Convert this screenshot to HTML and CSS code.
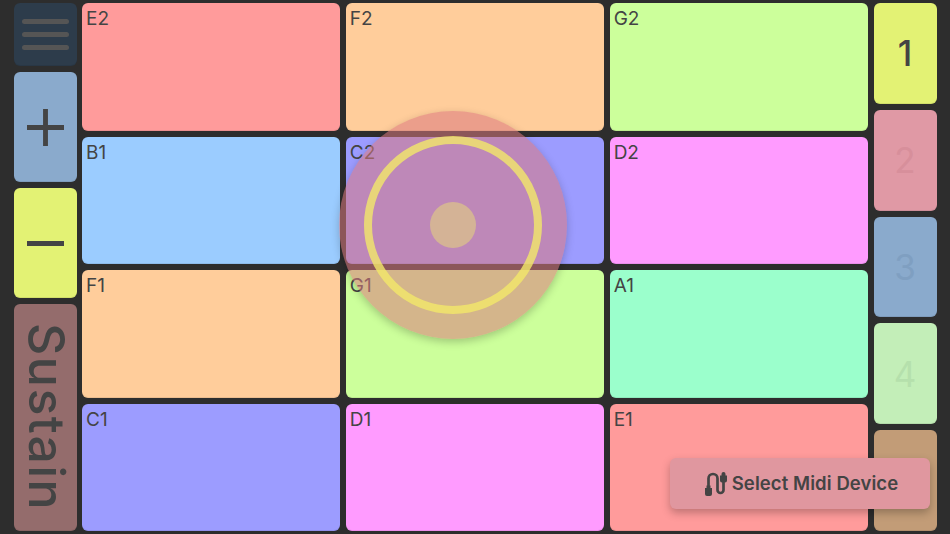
FILE: index.html
```html
<!DOCTYPE html>
<html lang="en">
<head>
<meta charset="utf-8">
<title>Midi Pads</title>
<link rel="stylesheet" href="styles.css">
</head>
<body>
<main class="app">
  <aside class="side">
    <button class="key menu" aria-label="Menu"><span class="bar"></span><span class="bar"></span><span class="bar"></span></button>
    <button class="key plus" aria-label="Octave up">
      <svg class="sign" viewBox="0 0 38 38"><path d="M16.500 0h5v16.500H38v5H21.500V38h-5V21.500H0v-5h16.500z"/></svg>
    </button>
    <button class="key minus" aria-label="Octave down">
      <svg class="sign" viewBox="0 0 38 38"><path d="M0 16.500h38v5H0z"/></svg>
    </button>
    <button class="key sustain"><span class="sustain-text">Sustain</span></button>
  </aside>
  <section class="pads">
    <div class="pad red">E2</div>
    <div class="pad orange">F2</div>
    <div class="pad green">G2</div>
    <div class="pad blue">B1</div>
    <div class="pad violet">C2</div>
    <div class="pad pink">D2</div>
    <div class="pad orange">F1</div>
    <div class="pad green">G1</div>
    <div class="pad mint">A1</div>
    <div class="pad violet">C1</div>
    <div class="pad pink">D1</div>
    <div class="pad red">E1</div>
  </section>
  <aside class="side channels">
    <button class="key ch ch1">1</button>
    <button class="key ch ch2">2</button>
    <button class="key ch ch3">3</button>
    <button class="key ch ch4">4</button>
    <button class="key ch ch5"></button>
  </aside>
  <div class="touch"><div class="ring"></div><div class="dot"></div></div>
  <button class="midi">
    <svg class="midi-icon" viewBox="0 0 23 24">
      <path class="cable" d="M4.500 15V6.500a4.500 4.500 0 0 1 9 0V18a3 3 0 0 0 6 0V9"/>
      <path class="plug" d="M2.500 13.500h4v2.500H8V22a2 2 0 0 1-2 2H3a2 2 0 0 1-2-2v-6h1.500z"/>
      <path class="plug" d="M17.500 2a2 2 0 0 1 4 0v1.500H23V8.500a2 2 0 0 1-2 2h-3a2 2 0 0 1-2-2v-5h1.500z"/>
    </svg>
    <span class="midi-label">Select Midi Device</span>
  </button>
</main>
</body>
</html>
```
FILE: styles.css
```css
* { box-sizing: border-box; }
html, body { margin: 0; height: 100%; }
body { background: #2d2d2d; font-family: Inter, "Liberation Sans", sans-serif; color: #444; overflow: hidden; }
button { border: 0; padding: 0; margin: 0; font: inherit; color: inherit; }

.app { position: relative; width: 950px; height: 534px; padding: 3px 13.500px; display: flex; gap: 5.500px; }

.side { width: 63px; flex: none; display: flex; flex-direction: column; gap: 6px; }
.key { display: flex; align-items: center; justify-content: center; border-radius: 6px; box-shadow: inset 0 -1px 0 rgba(0,0,0,.08); }

.menu { height: 63px; flex: none; flex-direction: column; gap: 8px; background: #2d3c4b; }
.bar { width: 47px; height: 5px; border-radius: 3px; background: #555; }
.plus { height: 110px; flex: none; background: #8aaacc; }
.minus { height: 110px; flex: none; background: #e3f274; }
.sign { width: 37px; height: 37px; fill: #444; }
.sustain { flex: 1; background: #946c6c; padding-left: 4px; }
.sustain-text { writing-mode: vertical-rl; font-size: 50px; font-weight: 500; line-height: 1; letter-spacing: 1.500px; }

.pads { flex: 1; display: grid; grid-template-columns: repeat(3, 1fr); grid-template-rows: repeat(4, 1fr); gap: 6px 5.500px; }
.pad { border-radius: 6px; padding: 4px; font-size: 19px; line-height: 23px; box-shadow: inset 0 -1px 0 rgba(0,0,0,.08); }
.red { background: #ff9b9b; }
.orange { background: #ffcd9b; }
.green { background: #ccff9b; }
.blue { background: #9bccff; }
.violet { background: #9c9cff; }
.pink { background: #ff9bff; }
.mint { background: #9bffcc; }

.channels { gap: 6px; }
.ch { flex: 1; font-size: 35px; }
.ch1 { background: #e3f274; color: #444; font-weight: 500; }
.ch2 { background: #e099a5; color: #d78f9b; }
.ch3 { background: #8aaacc; color: #7f9fc1; }
.ch4 { background: #c3eeb8; color: #b5e0ac; }
.ch5 { background: #c29c77; }

.touch { position: absolute; left: 338.500px; top: 110.500px; width: 228px; height: 228px; border-radius: 50%; background: rgba(218,120,125,.55); box-shadow: 0 3px 8px rgba(0,0,0,.22); display: flex; align-items: center; justify-content: center; }
.ring { position: absolute; left: 25px; top: 25px; width: 178px; height: 178px; border-radius: 50%; border: 8px solid rgba(243,232,105,.8); }
.dot { width: 46px; height: 46px; border-radius: 50%; background: #d4b396; }

.midi { position: absolute; left: 670px; top: 458px; width: 260px; height: 51px; padding-left: 2px; border-radius: 6px; background: #e0979f; box-shadow: 0 4px 8px rgba(0,0,0,.25); display: flex; align-items: center; justify-content: center; gap: 5px; font-size: 18.500px; letter-spacing: .08px; font-weight: 600; }
.midi-icon { width: 23px; height: 24px; }
.midi-label { padding-bottom: 2px; }
.cable { fill: none; stroke: #444; stroke-width: 2.700px; }
.plug { fill: #444; }
```
